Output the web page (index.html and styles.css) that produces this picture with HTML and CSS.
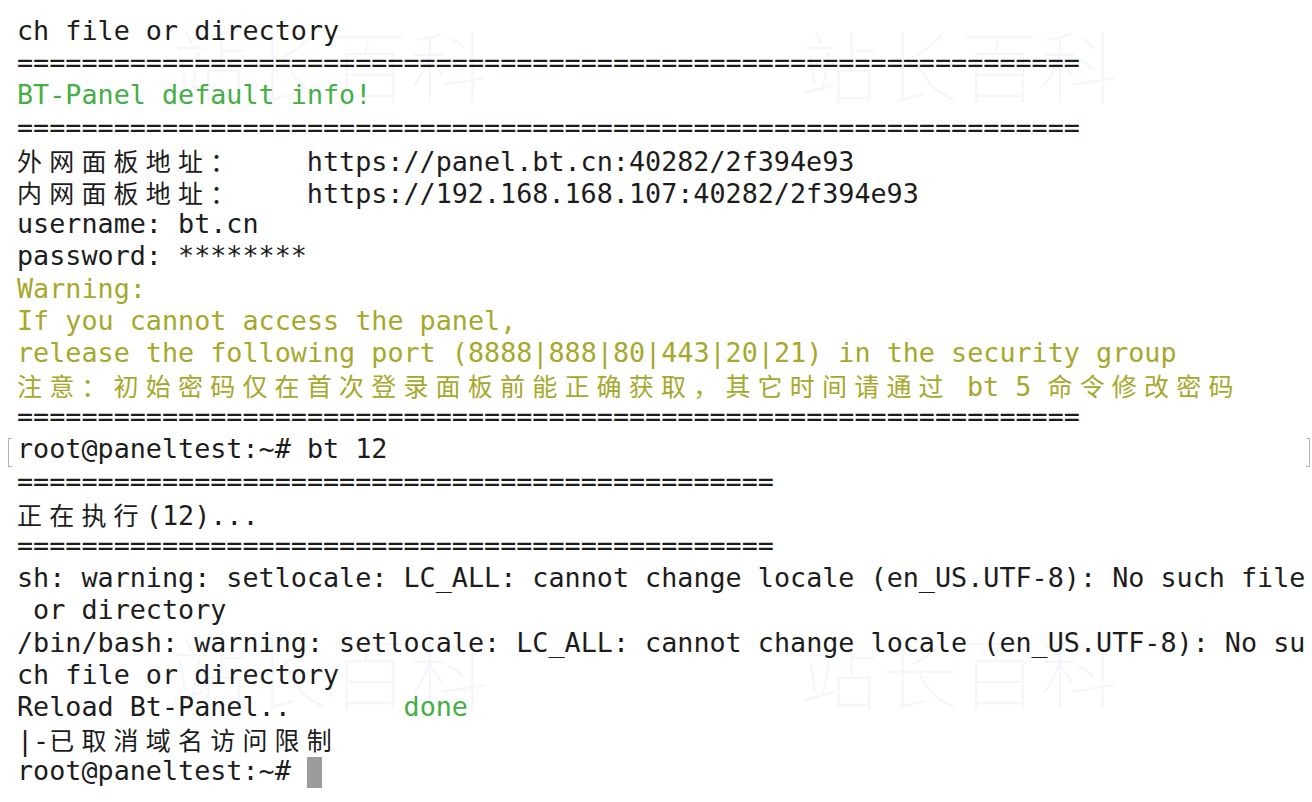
FILE: index.html
```html
<!DOCTYPE html>
<html lang="zh-CN">
<head>
<meta charset="utf-8">
<title>Terminal</title>
<link rel="stylesheet" href="styles.css">
</head>
<body>
<div class="term">
  <div class="wm wm-tl" aria-hidden="true">站长百科</div>
  <div class="wm wm-tr" aria-hidden="true">站长百科</div>
  <div class="wm wm-bl" aria-hidden="true">站长百科</div>
  <div class="wm wm-br" aria-hidden="true">站长百科</div>
  <div class="screen">
    <div class="ln">ch file or directory</div>
    <div class="ln">==================================================================</div>
    <div class="ln green">BT-Panel default info!</div>
    <div class="ln">==================================================================</div>
    <div class="ln"><span class="w">外网面板地址：</span>    https://panel.bt.cn:40282/2f394e93</div>
    <div class="ln"><span class="w">内网面板地址：</span>    https://192.168.168.107:40282/2f394e93</div>
    <div class="ln">username: bt.cn</div>
    <div class="ln">password: ********</div>
    <div class="ln olive">Warning:</div>
    <div class="ln olive">If you cannot access the panel,</div>
    <div class="ln olive">release the following port (8888|888|80|443|20|21) in the security group</div>
    <div class="ln olive"><span class="w">注意：初始密码仅在首次登录面板前能正确获取，其它时间请通过</span> bt 5 <span class="w">命令修改密码</span></div>
    <div class="ln">==================================================================</div>
    <div class="ln mark">root@paneltest:~# bt 12</div>
    <div class="ln">===============================================</div>
    <div class="ln"><span class="w">正在执行</span>(12)...</div>
    <div class="ln">===============================================</div>
    <div class="ln">sh: warning: setlocale: LC_ALL: cannot change locale (en_US.UTF-8): No such file</div>
    <div class="ln"> or directory</div>
    <div class="ln">/bin/bash: warning: setlocale: LC_ALL: cannot change locale (en_US.UTF-8): No su</div>
    <div class="ln">ch file or directory</div>
    <div class="ln">Reload Bt-Panel..       <span class="green">done</span></div>
    <div class="ln">|-<span class="w">已取消域名访问限制</span></div>
    <div class="ln">root@paneltest:~# <span class="cursor"></span></div>
  </div>
</div>
</body>
</html>
```
FILE: styles.css
```css
html, body {
  margin: 0;
  padding: 0;
  background: #ffffff;
}

.term {
  position: relative;
  width: 1312px;
  height: 802px;
  overflow: hidden;
  background: #ffffff;
}

.screen {
  position: relative;
  padding: 15px 0 0 17px;
  font-family: "DejaVu Sans Mono", "Liberation Mono", "Noto Sans CJK SC", monospace;
  font-size: 26.75px;
  line-height: 32.2px;
  color: #1c1c1c;
}

.ln {
  position: relative;
  height: 32.2px;
  white-space: pre;
}

.w {
  font-family: "Noto Sans CJK SC", sans-serif;
  font-size: 25px;
  letter-spacing: 7.2px;
}

.green {
  color: #45ae45;
}

.olive {
  color: #a6a82c;
}

.mark::before,
.mark::after {
  content: "";
  position: absolute;
  top: 5px;
  height: 27px;
  width: 3px;
  border: 1.5px solid #b4b4b4;
}

.mark::before {
  left: -9px;
  border-right: none;
}

.mark::after {
  right: 2px;
  border-left: none;
}

.cursor {
  display: inline-block;
  width: 15px;
  height: 31px;
  background: #9c9c9c;
  vertical-align: -8px;
}

.wm {
  position: absolute;
  font-family: "Noto Sans CJK SC", sans-serif;
  font-weight: 100;
  font-size: 78px;
  line-height: 90px;
  color: #f4f6f9;
  letter-spacing: 2px;
  pointer-events: none;
}

.wm-tl { left: 170px; top: 18px; }
.wm-tr { left: 800px; top: 18px; }
.wm-bl { left: 170px; top: 625px; }
.wm-br { left: 800px; top: 625px; }
```
